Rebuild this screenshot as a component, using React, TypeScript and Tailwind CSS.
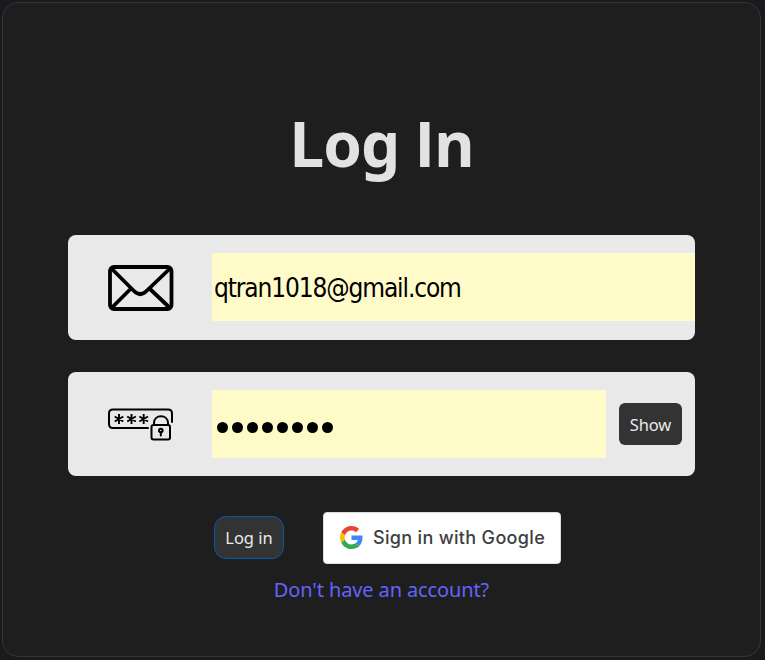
function MailIcon() {
  return (
    <svg width="66" height="46" viewBox="0 0 66 46" fill="none" stroke="#000" strokeWidth="3.8" className="block">
      <rect x="2" y="2" width="61.5" height="42" rx="4" />
      <path d="M3.5 3.5 26 26c4 4 8.500 4 12.500 0L62 3.5M3.5 43 22 24.500M62 43 42.500 24.500" />
    </svg>
  );
}

function PasswordIcon() {
  return (
    <svg width="66" height="34" viewBox="0 0 66 34" fill="none" stroke="#000" strokeWidth="2" strokeLinecap="round" className="mt-[2px] block">
      <path d="M40 20H5c-2.500 0-4-1.500-4-4V5.500C1 3 2.500 1.500 5 1.500h55c2.500 0 4 1.500 4 4V14" />
      <path strokeWidth="1.900" strokeLinecap="butt" d="M11 6v10M6.700 8.500l8.600 5M15.300 8.500l-8.600 5M23.500 6v10M19.200 8.500l8.600 5M27.800 8.500l-8.600 5M35.700 6v10M31.400 8.500l8.600 5M40 8.500l-8.600 5" />
      <rect x="43.500" y="17" width="18.500" height="14.500" rx="2" />
      <path d="M46 17v-2c0-9 14-9 14 0v2" />
      <circle cx="52.800" cy="22.500" r="1.800" />
      <path d="M52.800 24.500v3" />
    </svg>
  );
}

function GoogleLogo() {
  return (
    <svg width="23" height="23" viewBox="0 0 48 48" className="-mt-px block">
      <path fill="#EA4335" d="M24 9.500c3.540 0 6.710 1.220 9.210 3.600l6.850-6.850C35.900 2.380 30.470 0 24 0 14.620 0 6.510 5.380 2.560 13.220l7.980 6.190C12.430 13.720 17.740 9.500 24 9.500z" />
      <path fill="#4285F4" d="M46.980 24.550c0-1.570-.15-3.090-.38-4.550H24v9.020h12.940c-.58 2.960-2.260 5.480-4.780 7.180l7.730 6c4.510-4.180 7.090-10.360 7.090-17.650z" />
      <path fill="#FBBC05" d="M10.530 28.590c-.48-1.450-.76-2.990-.76-4.590s.27-3.140.76-4.590l-7.980-6.190C.92 16.460 0 20.120 0 24c0 3.880.92 7.540 2.560 10.780l7.970-6.190z" />
      <path fill="#34A853" d="M24 48c6.480 0 11.930-2.130 15.890-5.810l-7.730-6c-2.150 1.450-4.920 2.300-8.160 2.300-6.260 0-11.570-4.220-13.470-9.910l-7.980 6.190C6.510 42.620 14.620 48 24 48z" />
    </svg>
  );
}

export default function App() {
  return (
    <div className="h-[660px] w-[765px] overflow-hidden bg-[#1a1a1e] pl-[2px] pt-[2px] font-['Noto_Sans',sans-serif]">
      <main className="flex h-[655px] w-[759px] flex-col rounded-[16px] border border-[#343434] bg-[#1e1e1e] pl-[65px] pt-[100px]">
        <h1 className="flex h-[80px] w-[627px] justify-center whitespace-pre text-[62px] font-bold leading-[80px] tracking-[-0.900px] text-[#e2e2e2]">
          <span>Log <span className="font-['Open_Sans',sans-serif]">I</span>n</span>
        </h1>
        <div className="mt-[52px] flex h-[105px] w-[627px] items-center overflow-hidden rounded-[8px] bg-[#e9e9e9] pl-10">
          <MailIcon />
          <div className="-mt-px ml-[38px] flex h-[68px] w-[483px] items-center bg-[#fffbc8] pl-[2px] pt-[2px] text-[26px] text-black">
            <span className="whitespace-nowrap font-['DejaVu_Sans_Condensed','DejaVu_Sans',sans-serif] tracking-[-1.120px] [font-stretch:condensed]">qtran1018@gmail.com</span>
          </div>
        </div>
        <div className="mt-8 flex h-[104px] w-[627px] items-center rounded-[8px] bg-[#e9e9e9] pl-10">
          <PasswordIcon />
          <div className="ml-[38px] flex h-[68px] w-[394px] items-center gap-[3.500px] bg-[#fffbc8] pl-[4.500px] pt-[7px]">
            {Array.from({ length: 8 }, (_, i) => (
              <span key={i} className="size-[11.500px] rounded-full bg-black" />
            ))}
          </div>
          <button className="ml-[13px] h-[42px] w-[63px] rounded-[6px] bg-[#333] pt-[2px] text-[16.500px] tracking-[-0.100px] text-[#e9e9e9]">Show</button>
        </div>
        <div className="mt-9 flex items-center pl-[146px]">
          <button className="-mt-px h-[43px] w-[70px] rounded-[12px] border border-[#0758a8] bg-[#333] pt-px text-[16.500px] text-[#e9e9e9]">Log in</button>
          <button className="ml-[39px] flex h-[52px] w-[238px] items-center rounded-[4px] border border-[#dadce0] bg-white pl-4 text-[#3c4043]">
            <GoogleLogo />
            <span className="-mt-px ml-[10px] whitespace-nowrap font-['Inter',sans-serif] text-[18px] font-medium tracking-[0.330px]">Sign in with Google</span>
          </button>
        </div>
        <a className="mt-[11px] w-[627px] text-center text-[20px] leading-[30px] tracking-[-0.120px] text-[#6264fa]">Don't have an account?</a>
      </main>
    </div>
  );
}
